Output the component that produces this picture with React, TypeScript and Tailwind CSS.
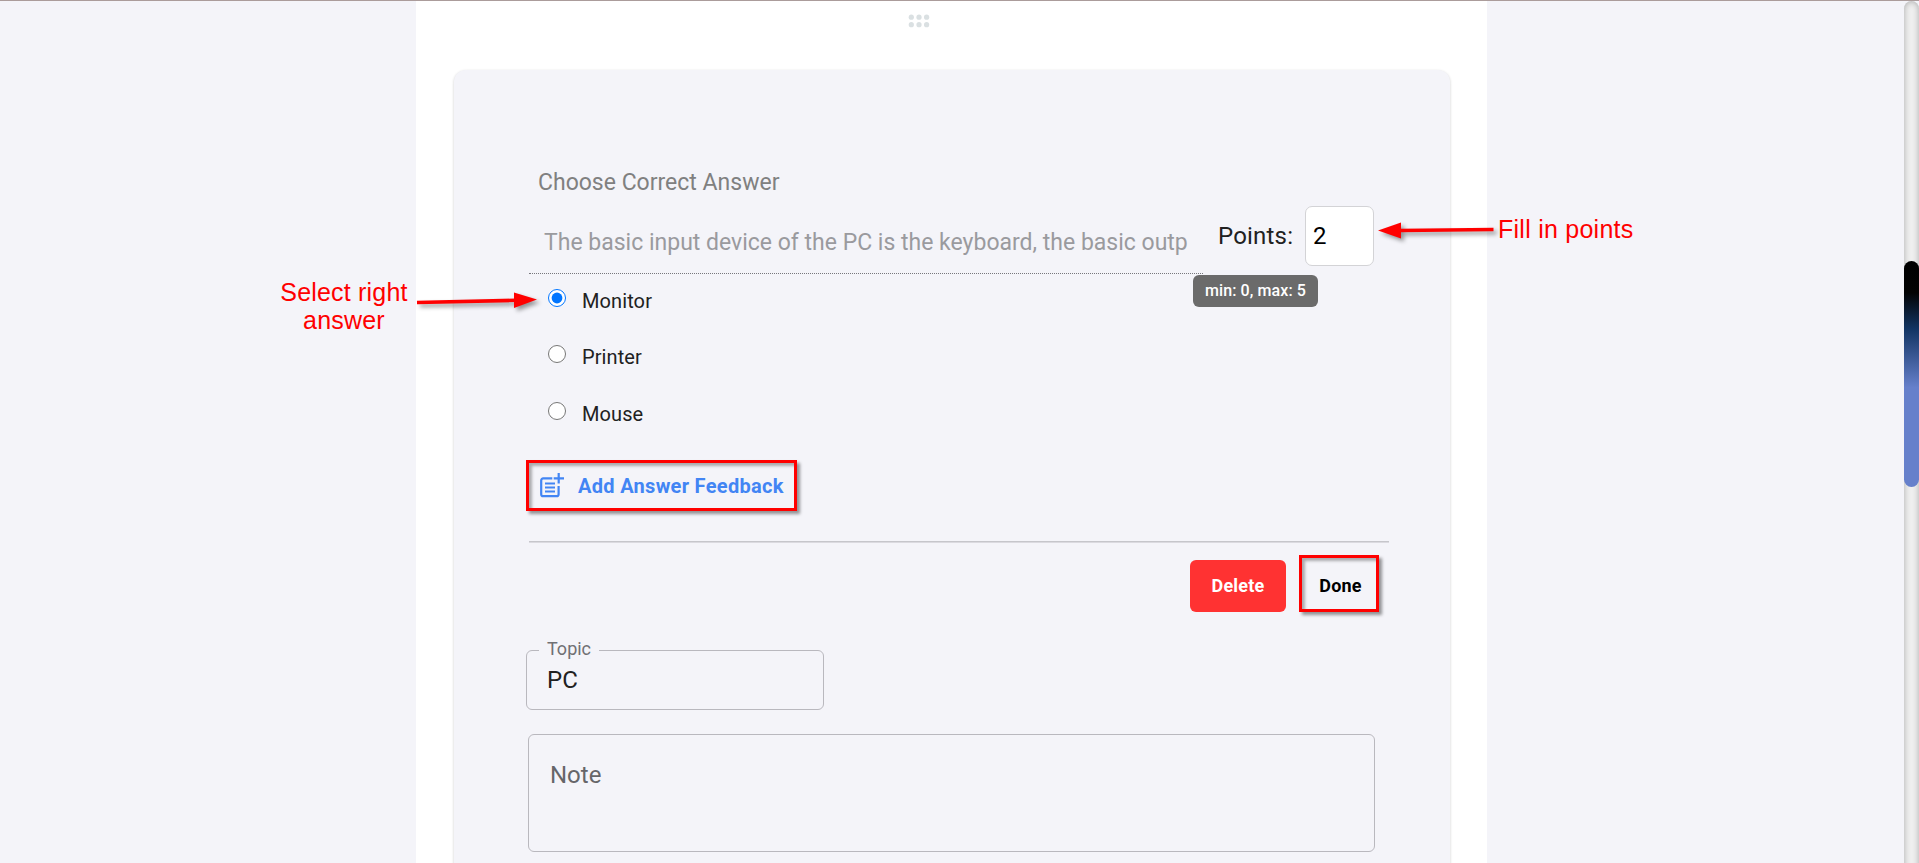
import React from "react";

const options = [
  { label: "Monitor", gap: "mt-[15px]", checked: true },
  { label: "Printer", gap: "mt-[26px]", checked: false },
  { label: "Mouse", gap: "mt-[27px]", checked: false },
];

function DragHandle() {
  return (
    <svg className="ml-[492px] mt-[13px] block shrink-0" width="22" height="15" viewBox="0 0 22 15" fill="#dae0e2">
      {[3.3, 11, 18.6].map((x) =>
        [3.2, 10.7].map((y) => <circle key={`${x}-${y}`} cx={x} cy={y} r="2.6" />)
      )}
    </svg>
  );
}

function PostAddIcon() {
  return (
    <svg className="-mt-px shrink-0" width="25" height="25" viewBox="0 0 25 25" fill="none" stroke="#4285f4" strokeWidth="2.2">
      <path d="M12.300 5.400H3.200a2 2 0 0 0-2 2V21.200a2 2 0 0 0 2 2H16.600a2 2 0 0 0 2-2V13" />
      <path d="M18.700 0V10.600M13.700 5.300H24" />
      <path d="M5 10.400H15M5 14.400H15M5 18.400H15" strokeWidth="2" />
    </svg>
  );
}

function Arrows() {
  return (
    <svg
      className="pointer-events-none absolute -top-px left-0 drop-shadow-[3px_3px_2px_rgba(0,0,0,0.4)]"
      width="1919"
      height="863"
      viewBox="0 0 1919 863"
      fill="#ff0000"
      stroke="none"
    >
      <path d="M417 302.500L516 300.300" stroke="#ff0000" strokeWidth="3.600" />
      <path d="M514 292.500L537 299.500L514 308Z" />
      <path d="M1493.500 229.500L1400 230.500" stroke="#ff0000" strokeWidth="3.600" />
      <path d="M1401 222.500L1378 230.500L1401 238.500Z" />
    </svg>
  );
}

function Scrollbar() {
  return (
    <div className="absolute right-0 top-0 h-[880px] w-[15px] rounded-[8px] bg-[#efefef] pt-[260px] shadow-[inset_0_0_6px_rgba(0,0,0,0.3)]">
      <div className="h-[226px] w-full rounded-[8px] bg-[linear-gradient(to_bottom,#000_0%,#030303_14%,#123463_30%,#6680cb_56%,#6680cb_100%)]" />
    </div>
  );
}

export default function App() {
  return (
    <div className="relative flex h-[863px] w-full overflow-hidden border-t border-[#ab9c9b] bg-[#f4f4f9] font-[Roboto,sans-serif] text-[#212121]">
      <main className="ml-[416px] flex h-full w-[1071px] flex-col bg-white">
        <DragHandle />
        <section className="ml-[38px] mt-[41px] flex h-[820px] w-[996px] shrink-0 flex-col rounded-t-[12px] bg-[#f4f4f9] pl-[75px] shadow-[0_1px_3px_rgba(0,0,0,0.2)]">
          <h2 className="ml-[9px] mt-[97px] text-[23px] leading-[32px] text-[#808080]">Choose Correct Answer</h2>
          <div className="flex">
            <div className="mt-[28px] h-[47px] w-[674px] border-b border-dotted border-[#77777c] pl-[15px]">
              <p className="whitespace-nowrap text-[23px] leading-[32px] text-[#9a9a9e]">
                The basic input device of the PC is the keyboard, the basic outp
              </p>
            </div>
            <label className="ml-[15px] mt-[21px] w-[75px] text-[24px] leading-[32px] tracking-[0.2px]">Points:</label>
            <div className="ml-[12px] mt-[7px] flex h-[60px] w-[69px] items-center rounded-[7px] border border-[#d3d3d6] bg-white pl-[7px] text-[24px] text-black">
              2
            </div>
          </div>
          <div className="flex flex-col">
            {options.map((o) => (
              <label key={o.label} className={`flex h-[30px] items-start ${o.gap}`}>
                <input type="radio" name="answer" defaultChecked={o.checked} className="ml-[19px] h-[18px] w-[18px]" />
                <span className="ml-[16px] text-[20px] leading-[24px] tracking-[0.1px]">{o.label}</span>
              </label>
            ))}
          </div>
          <button className="-ml-[3px] mt-[28px] flex h-[51px] w-[271px] shrink-0 items-center border-[3px] border-[#ff0000] pl-[11px] shadow-[3px_3px_3px_rgba(0,0,0,0.4),inset_3px_3px_3px_rgba(0,0,0,0.3)]">
            <PostAddIcon />
            <span className="ml-[13px] mt-px whitespace-nowrap text-[20px] font-bold tracking-[0.3px] text-[#4285f4]">
              Add Answer Feedback
            </span>
          </button>
          <div className="mt-[30px] h-[2px] w-[860px] shrink-0 border-t border-[#c6c6cb] bg-[#dbdae0]" />
          <div className="ml-[661px] mt-[17px] flex h-[52px] shrink-0 text-[18px] font-bold tracking-[0.2px]">
            <button className="h-[52px] w-[96px] rounded-[6px] bg-[#ff3232] pb-[2px] text-white">Delete</button>
            <button className="-mt-[5px] ml-[13px] h-[57px] w-[80px] border-[3px] border-[#ff0000] pl-[3px] pt-[3px] text-black shadow-[3px_3px_3px_rgba(0,0,0,0.4),inset_3px_3px_3px_rgba(0,0,0,0.3)]">
              Done
            </button>
          </div>
          <div className="relative -ml-[3px] mt-[38px] h-[60px] w-[298px] shrink-0 rounded-[6px] border border-[#b9b8be] pl-[20px] pt-[13px]">
            <span className="absolute -top-[12px] left-[12px] w-[60px] bg-[#f4f4f9] pl-[8px] text-[18px] leading-[20px] text-[#707074]">
              Topic
            </span>
            <p className="text-[24px] leading-[32px]">PC</p>
          </div>
          <div className="-ml-[1px] mt-[24px] h-[118px] w-[847px] shrink-0 rounded-[6px] border border-[#b9b8be] pl-[21px] pt-[24px] text-[24px] leading-[32px] text-[#666669]">
            Note
          </div>
        </section>
      </main>
      <p className="absolute left-[274px] top-[277px] w-[140px] text-center font-['Liberation_Sans',sans-serif] text-[25px] leading-[28px] tracking-[0.2px] text-[#ff0000]">
        Select right answer
      </p>
      <p className="absolute left-[1498px] top-[214px] whitespace-nowrap font-['Liberation_Sans',sans-serif] text-[25px] leading-[28px] tracking-[0.25px] text-[#ff0000]">
        Fill in points
      </p>
      <div className="absolute left-[1193px] top-[274px] flex h-[32px] w-[125px] items-center justify-center rounded-[6px] bg-[#6b6b6b] text-[16px] font-medium tracking-[0.1px] text-white">
        min: 0, max: 5
      </div>
      <Arrows />
      <Scrollbar />
    </div>
  );
}
